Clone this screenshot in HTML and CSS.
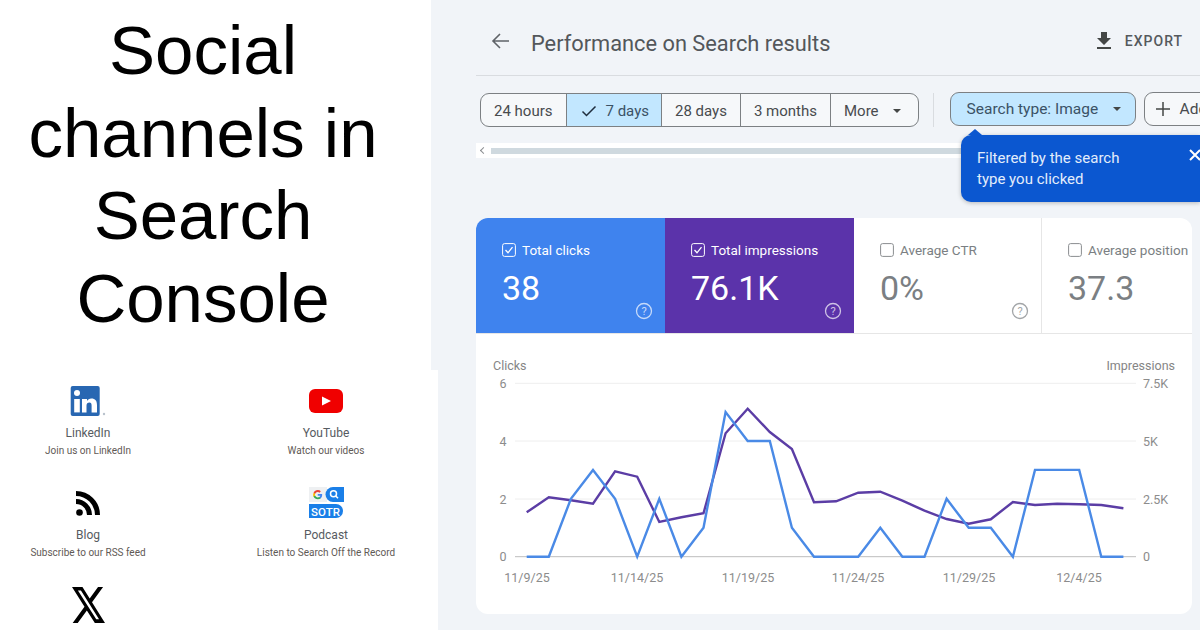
FILE: index.html
```html
<!DOCTYPE html>
<html lang="en">
<head>
    <meta charset="UTF-8">
    <title>Social channels in Search Console</title>
    <link rel="stylesheet" href="styles.css">
</head>
<body>
    <!-- Left side: headline and channel links -->
    <div class="intro">
        <h1 class="headline">Social channels in Search Console</h1>
        <div class="channels">
            <div class="channel">
                <div class="channel-icon">
                    <svg width="36" height="30" viewBox="0 0 36 30">
                        <rect x="0.7" width="29" height="30" rx="2" fill="#2867b2"/>
                        <circle cx="7" cy="7" r="3" fill="#fff"/>
                        <rect x="4.2" y="13" width="5.6" height="13.4" fill="#fff"/>
                        <path d="M12 13h5v2c.8-1.4 2.4-2.4 4.3-2.4 4 0 5.7 2.4 5.7 6.4v7.4h-5.4v-6.6c0-2-.6-3.2-2.2-3.2-1.8 0-2.9 1.2-2.9 3.2v6.6H12z" fill="#fff"/>
                        <circle cx="34" cy="28" r="1.2" fill="#b9c2cc"/>
                    </svg>
                </div>
                <div class="channel-name">LinkedIn</div>
                <div class="channel-text">Join us on LinkedIn</div>
            </div>
            <div class="channel">
                <div class="channel-icon">
                    <svg width="34" height="24" viewBox="0 0 34 24">
                        <rect width="34" height="24" rx="6" fill="#f00000"/>
                        <path d="M13 7.5l9 4.5-9 4.500z" fill="#fff"/>
                    </svg>
                </div>
                <div class="channel-name">YouTube</div>
                <div class="channel-text">Watch our videos</div>
            </div>
            <div class="channel">
                <div class="channel-icon">
                    <svg width="26" height="26" viewBox="0 0 26 26">
                        <circle cx="4.500" cy="22.500" r="3.300" fill="#000"/>
                        <path d="M1 3.500A21.500 21.500 0 0 1 22.500 25M1 11.500A13.500 13.500 0 0 1 14.500 25" fill="none" stroke="#000" stroke-width="5"/>
                    </svg>
                </div>
                <div class="channel-name">Blog</div>
                <div class="channel-text">Subscribe to our RSS feed</div>
            </div>
            <div class="channel">
                <div class="channel-icon">
                    <svg width="35" height="32" viewBox="0 0 35 32">
                        <rect width="18" height="15" fill="#eef0f2"/>
                        <g transform="translate(3.700 2.700) scale(0.42)">
                            <path d="M22.560 12.250c0-.78-.07-1.530-.2-2.250H12v4.260h5.920c-.26 1.370-1.040 2.530-2.210 3.310v2.770h3.570c2.080-1.920 3.280-4.740 3.280-8.090z" fill="#4285f4"/>
                            <path d="M12 23c2.970 0 5.460-.98 7.280-2.660l-3.570-2.770c-.98.66-2.230 1.060-3.710 1.060-2.860 0-5.290-1.930-6.160-4.530H2.180v2.840C3.990 20.530 7.700 23 12 23z" fill="#34a853"/>
                            <path d="M5.840 14.090c-.22-.66-.35-1.360-.35-2.090s.13-1.430.35-2.090V7.070H2.180C1.430 8.550 1 10.220 1 12s.43 3.450 1.180 4.930l3.660-2.840z" fill="#fbbc05"/>
                            <path d="M12 5.380c1.620 0 3.060.56 4.210 1.640l3.150-3.150C17.450 2.090 14.970 1 12 1 7.700 1 3.990 3.470 2.180 7.070l3.660 2.840c.87-2.600 3.300-4.530 6.160-4.530z" fill="#ea4335"/>
                        </g>
                        <path d="M24 0h11v15H24a7.500 7.500 0 0 1 0-15z" fill="#1a7fe8"/>
                        <circle cx="24.500" cy="6.700" r="3" fill="none" stroke="#fff" stroke-width="1.500"/>
                        <path d="M26.700 9l2.300 2.300" stroke="#fff" stroke-width="1.600"/>
                        <path d="M0 17h27a7 7 0 0 1 0 14H0z" fill="#1a7fe8"/>
                        <text class="sotr-text" x="16.500" y="28.800" text-anchor="middle">SOTR</text>
                    </svg>
                </div>
                <div class="channel-name">Podcast</div>
                <div class="channel-text">Listen to Search Off the Record</div>
            </div>
            <div class="channel">
                <div class="channel-icon">
                    <svg width="33" height="36" viewBox="1.250 2.250 21.550 19.500" preserveAspectRatio="none">
                        <path d="M18.244 2.250h3.308l-7.227 8.260 8.502 11.240H16.170l-5.214-6.817L4.990 21.750H1.680l7.730-8.835L1.254 2.250H8.080l4.713 6.231zm-1.161 17.520h1.833L7.084 4.126H5.117z" fill="#000"/>
                    </svg>
                </div>
            </div>
        </div>
    </div>

    <!-- Right side: Search Console screenshot -->
    <div class="console">
        <div class="top-bar">
            <svg class="back-arrow" width="24" height="24" viewBox="0 0 24 24">
                <path d="M20 12H4M11 5l-7 7 7 7" fill="none" stroke="#5f6368" stroke-width="1.600"/>
            </svg>
            <div class="page-title">Performance on Search results</div>
            <div class="export">
                <svg width="24" height="24" viewBox="0 0 24 24">
                    <path d="M19 9h-4V3H9v6H5l7 7 7-7zM5 18v2h14v-2H5z" fill="#444746"/>
                </svg>
                <span>EXPORT</span>
            </div>
        </div>

        <div class="filters">
            <div class="range-group">
                <div class="range-item">24 hours</div>
                <div class="range-item range-selected">
                    <svg width="16" height="16" viewBox="0 0 16 16">
                        <path d="M1.500 8.500l4 4 9-9" fill="none" stroke="#1f2d3d" stroke-width="1.500"/>
                    </svg>
                    7 days
                </div>
                <div class="range-item">28 days</div>
                <div class="range-item">3 months</div>
                <div class="range-item range-more">More <span class="caret"></span></div>
            </div>
            <div class="filter-divider"></div>
            <div class="chip chip-active">Search type: Image <span class="caret"></span></div>
            <div class="chip chip-add">
                <svg width="16" height="16" viewBox="0 0 16 16">
                    <path d="M8 1v14M1 8h14" stroke="#444746" stroke-width="1.500"/>
                </svg>
                Add filter
            </div>
        </div>

        <div class="scroll-strip">
            <span class="scroll-arrow"></span>
            <div class="scroll-bar"></div>
        </div>

        <!-- Tooltip over the filter row -->
        <div class="tooltip">
            <div>Filtered by the search<br>type you clicked</div>
            <svg class="tooltip-close" width="12" height="12" viewBox="0 0 12 12">
                <path d="M1 1l10 10M11 1L1 11" stroke="#fff" stroke-width="2"/>
            </svg>
        </div>

        <div class="panel">
            <div class="tabs">
                <div class="tab tab-clicks">
                    <div class="tab-label">
                        <svg class="checkbox" width="14" height="14" viewBox="0 0 14 14">
                            <rect x="0.600" y="0.600" width="12.800" height="12.800" rx="2" fill="none" stroke="#fff"/>
                            <path d="M3.500 7l2.500 2.800 4.500-5.600" fill="none" stroke="#fff" stroke-width="1.300"/>
                        </svg>
                        Total clicks
                    </div>
                    <div class="tab-value">38</div>
                    <svg class="tab-help" width="18" height="18" viewBox="0 0 18 18">
                        <circle cx="9" cy="9" r="7.500" fill="none" stroke="currentColor" stroke-width="1.300"/>
                        <text x="9" y="13" text-anchor="middle" class="help-mark">?</text>
                    </svg>
                </div>
                <div class="tab tab-impressions">
                    <div class="tab-label">
                        <svg class="checkbox" width="14" height="14" viewBox="0 0 14 14">
                            <rect x="0.600" y="0.600" width="12.800" height="12.800" rx="2" fill="none" stroke="#fff"/>
                            <path d="M3.500 7l2.500 2.800 4.500-5.600" fill="none" stroke="#fff" stroke-width="1.300"/>
                        </svg>
                        Total impressions
                    </div>
                    <div class="tab-value">76.1K</div>
                    <svg class="tab-help" width="18" height="18" viewBox="0 0 18 18">
                        <circle cx="9" cy="9" r="7.500" fill="none" stroke="currentColor" stroke-width="1.300"/>
                        <text x="9" y="13" text-anchor="middle" class="help-mark">?</text>
                    </svg>
                </div>
                <div class="tab tab-off">
                    <div class="tab-label">
                        <svg class="checkbox" width="14" height="14" viewBox="0 0 14 14">
                            <rect x="0.600" y="0.600" width="12.800" height="12.800" rx="2" fill="none" stroke="#8a8d90"/>
                        </svg>
                        Average CTR
                    </div>
                    <div class="tab-value">0%</div>
                    <svg class="tab-help" width="18" height="18" viewBox="0 0 18 18">
                        <circle cx="9" cy="9" r="7.500" fill="none" stroke="currentColor" stroke-width="1.300"/>
                        <text x="9" y="13" text-anchor="middle" class="help-mark">?</text>
                    </svg>
                </div>
                <div class="tab tab-off tab-last">
                    <div class="tab-label">
                        <svg class="checkbox" width="14" height="14" viewBox="0 0 14 14">
                            <rect x="0.600" y="0.600" width="12.800" height="12.800" rx="2" fill="none" stroke="#8a8d90"/>
                        </svg>
                        Average position
                    </div>
                    <div class="tab-value">37.3</div>
                </div>
            </div>

            <!-- Chart: viewBox uses page coordinates -->
            <svg class="chart" width="716" height="280" viewBox="476 334 716 280">
                <text class="axis-title" x="493" y="370">Clicks</text>
                <text class="axis-title" x="1175" y="370" text-anchor="end">Impressions</text>

                <path class="grid-line" d="M515 383.300H1136M515 441H1136M515 499H1136"/>
                <path class="zero-line" d="M515 556.700H1136"/>

                <text class="axis-label" x="503" y="388" text-anchor="middle">6</text>
                <text class="axis-label" x="503" y="446" text-anchor="middle">4</text>
                <text class="axis-label" x="503" y="504" text-anchor="middle">2</text>
                <text class="axis-label" x="503" y="561" text-anchor="middle">0</text>

                <text class="axis-label" x="1143" y="388">7.5K</text>
                <text class="axis-label" x="1143" y="446">5K</text>
                <text class="axis-label" x="1143" y="504">2.5K</text>
                <text class="axis-label" x="1143" y="561">0</text>

                <text class="axis-label" x="527" y="582" text-anchor="middle">11/9/25</text>
                <text class="axis-label" x="637" y="582" text-anchor="middle">11/14/25</text>
                <text class="axis-label" x="748" y="582" text-anchor="middle">11/19/25</text>
                <text class="axis-label" x="858" y="582" text-anchor="middle">11/24/25</text>
                <text class="axis-label" x="969" y="582" text-anchor="middle">11/29/25</text>
                <text class="axis-label" x="1079" y="582" text-anchor="middle">12/4/25</text>

                <polyline class="line-impressions" points="526.700,512.300 548.800,497.300 570.900,500.300 593,503.700 615.100,471.300 637.200,476.700 659.300,522 681.400,517.300 703.500,513.300 725.600,433.300 747.700,408.700 769.800,432 791.900,449 814,502.300 836.100,501.300 858.200,492.700 880.300,491.700 902.400,500.700 924.500,510.700 946.600,519 968.700,523.700 990.800,519.300 1012.900,502 1035,505 1057.100,503.700 1079.200,504.300 1101.300,505 1123.400,508.300"/>
                <polyline class="line-clicks" points="526.700,556.700 548.800,556.700 570.900,498.800 593,469.900 615.100,498.800 637.200,556.700 659.300,498.800 681.400,556.700 703.500,527.800 725.600,412 747.700,441 769.800,441 791.900,527.800 814,556.700 836.100,556.700 858.200,556.700 880.300,527.800 902.400,556.700 924.500,556.700 946.600,498.800 968.700,527.800 990.800,527.800 1012.900,556.700 1035,469.900 1057.100,469.900 1079.200,469.900 1101.300,556.700 1123.400,556.700"/>
            </svg>
        </div>
    </div>
</body>
</html>
```
FILE: styles.css
```css
/* General page */
body {
    margin: 0;
    width: 1200px;
    height: 630px;
    overflow: hidden;
    display: flex;
    background-color: #f1f4f8;
    font-family: Roboto, sans-serif;
}

/* Left side */
.intro {
    flex: 0 0 431px;
    min-width: 0;
    position: relative;
    z-index: 1;
    background-color: white;
}

.headline {
    box-sizing: border-box;
    height: 370px;
    width: 406px;
    margin: 0;
    padding-top: 10px;
    font-family: "Liberation Sans", Arial, sans-serif;
    font-size: 69px;
    font-weight: normal;
    line-height: 82.500px;
    text-align: center;
    color: black;
}

.channels {
    box-sizing: border-box;
    width: 438px;
    height: 260px;
    padding-top: 13px;
    background-color: white;
    display: grid;
    grid-template-columns: 176px 176px;
    column-gap: 62px;
    row-gap: 26px;
    align-content: start;
}

.channel {
    text-align: center;
}

.channel-icon {
    height: 36px;
    display: flex;
    justify-content: center;
    align-items: center;
}

.channel-name {
    margin-top: 6px;
    font-size: 12px;
    line-height: 16px;
    color: #565b61;
}

.channel-text {
    margin-top: 2px;
    font-size: 10px;
    line-height: 16px;
    color: #5f5a56;
}

.sotr-text {
    font-family: Roboto, sans-serif;
    font-size: 11.500px;
    font-weight: 500;
    fill: white;
}

/* Right side */
.console {
    flex: 1;
    min-width: 0;
    position: relative;
    padding-left: 45px;
}

.top-bar {
    box-sizing: border-box;
    height: 76px;
    padding: 6px 17px 0 13px;
    border-bottom: 1px solid #d9dce0;
    display: flex;
    align-items: center;
}

.back-arrow {
    margin-right: 18px;
}

.page-title {
    flex: 1;
    margin-top: 6px;
    font-size: 21.800px;
    color: #53575b;
}

.export {
    display: flex;
    align-items: center;
    gap: 9px;
    font-size: 14px;
    font-weight: 500;
    letter-spacing: 1px;
    color: #55595d;
}

/* Filters */
.filters {
    margin-top: 16px;
    padding-left: 4px;
    height: 35px;
    display: flex;
    overflow: hidden;
    white-space: nowrap;
}

.range-group {
    box-sizing: border-box;
    margin-top: 1px;
    display: flex;
    flex-shrink: 0;
    border: 1px solid #7c8083;
    border-radius: 9px;
    overflow: hidden;
    background-color: #f6f8fa;
}

.range-item {
    display: flex;
    align-items: center;
    padding: 1px 13px 0;
    font-size: 15px;
    color: #484b4e;
    border-left: 1px solid #7c8083;
}

.range-item:first-child {
    border-left: none;
}

.range-selected {
    padding: 1px 12px 0 14px;
    gap: 9px;
    background-color: #c2e7ff;
    color: #3b5266;
}

.range-more {
    gap: 14px;
    padding-right: 17px;
}

.caret {
    width: 0;
    height: 0;
    border-left: 4px solid transparent;
    border-right: 4px solid transparent;
    border-top: 4px solid #444746;
}

.filter-divider {
    flex-shrink: 0;
    width: 1px;
    margin: 1px 16px 0 14px;
    background-color: #d9dce0;
}

.chip {
    box-sizing: border-box;
    flex-shrink: 0;
    height: 34px;
    display: flex;
    align-items: center;
    border: 1px solid #7c8083;
    border-radius: 9px;
    font-size: 15.500px;
}

.chip-active {
    width: 186px;
    padding: 0 14px 0 16px;
    justify-content: space-between;
    background-color: #c2e7ff;
    color: #3b5266;
}

.chip-add {
    margin-left: 8px;
    padding: 0 12px 0 10px;
    gap: 9px;
    background-color: #f6f8fa;
    color: #484b4e;
}

.scroll-strip {
    margin-top: 16px;
    height: 15px;
    padding-left: 15px;
    display: flex;
    align-items: center;
    position: relative;
    background-color: white;
    margin-right: 8px;
}

.scroll-arrow {
    position: absolute;
    left: 5px;
    top: 5px;
    width: 4px;
    height: 4px;
    border-left: 1px solid #8a8d90;
    border-bottom: 1px solid #8a8d90;
    transform: rotate(45deg);
}

.scroll-bar {
    flex: 1;
    height: 6px;
    background-color: #cfd9df;
}

/* Tooltip */
.tooltip {
    box-sizing: border-box;
    position: absolute;
    left: 530px;
    right: 0;
    top: 135px;
    height: 67px;
    padding: 13px 0 0 16px;
    border-radius: 10px 0 0 10px;
    background-color: #0b57d0;
    color: #e3edfb;
    font-size: 15px;
    line-height: 21px;
    box-shadow: 0 1px 4px rgba(0, 0, 0, 0.25);
    z-index: 2;
}

.tooltip::before {
    content: "";
    position: absolute;
    left: 7px;
    top: -6px;
    border-left: 7px solid transparent;
    border-right: 7px solid transparent;
    border-bottom: 6px solid #0b57d0;
}

.tooltip-close {
    position: absolute;
    left: 228px;
    top: 14px;
}

/* Card with tabs and chart */
.panel {
    height: 396px;
    margin: 60px 8px 0 0;
    border-radius: 12px;
    overflow: hidden;
    background-color: white;
}

.tabs {
    height: 116px;
    display: grid;
    grid-template-columns: 189px 189px 188px 150px;
    border-bottom: 1px solid #e6e6e6;
    box-sizing: border-box;
}

.tab {
    box-sizing: border-box;
    padding: 24px 0 0 26px;
    display: flex;
    flex-direction: column;
}

.tab-clicks {
    background-color: #3f83ee;
    color: white;
}

.tab-impressions {
    background-color: #5b33aa;
    color: white;
}

.tab-off {
    color: #7b7f83;
    border-right: 1px solid #e6e6e6;
}

.tab-last {
    border-right: none;
}

.tab-label {
    display: flex;
    align-items: center;
    gap: 6px;
    height: 16px;
    font-size: 13.500px;
    white-space: nowrap;
}

.tab-value {
    margin-top: 12px;
    font-size: 34px;
    line-height: 36px;
}

.tab-help {
    align-self: flex-end;
    margin: -4px 12px 0 0;
    opacity: 0.7;
}

.help-mark {
    font-family: Roboto, sans-serif;
    font-size: 11px;
    fill: currentColor;
}

/* Chart */
.chart {
    display: block;
}

.axis-title {
    font-family: Roboto, sans-serif;
    font-size: 12.500px;
    fill: #858585;
}

.axis-label {
    font-family: Roboto, sans-serif;
    font-size: 12.500px;
    fill: #8c8c8c;
}

.grid-line {
    stroke: #eeeeee;
    stroke-width: 1;
    fill: none;
}

.zero-line {
    stroke: #bdbdbd;
    stroke-width: 1;
    fill: none;
}

.line-clicks {
    fill: none;
    stroke: #4a8ae6;
    stroke-width: 2.400;
}

.line-impressions {
    fill: none;
    stroke: #5b3da5;
    stroke-width: 2.400;
}
```
